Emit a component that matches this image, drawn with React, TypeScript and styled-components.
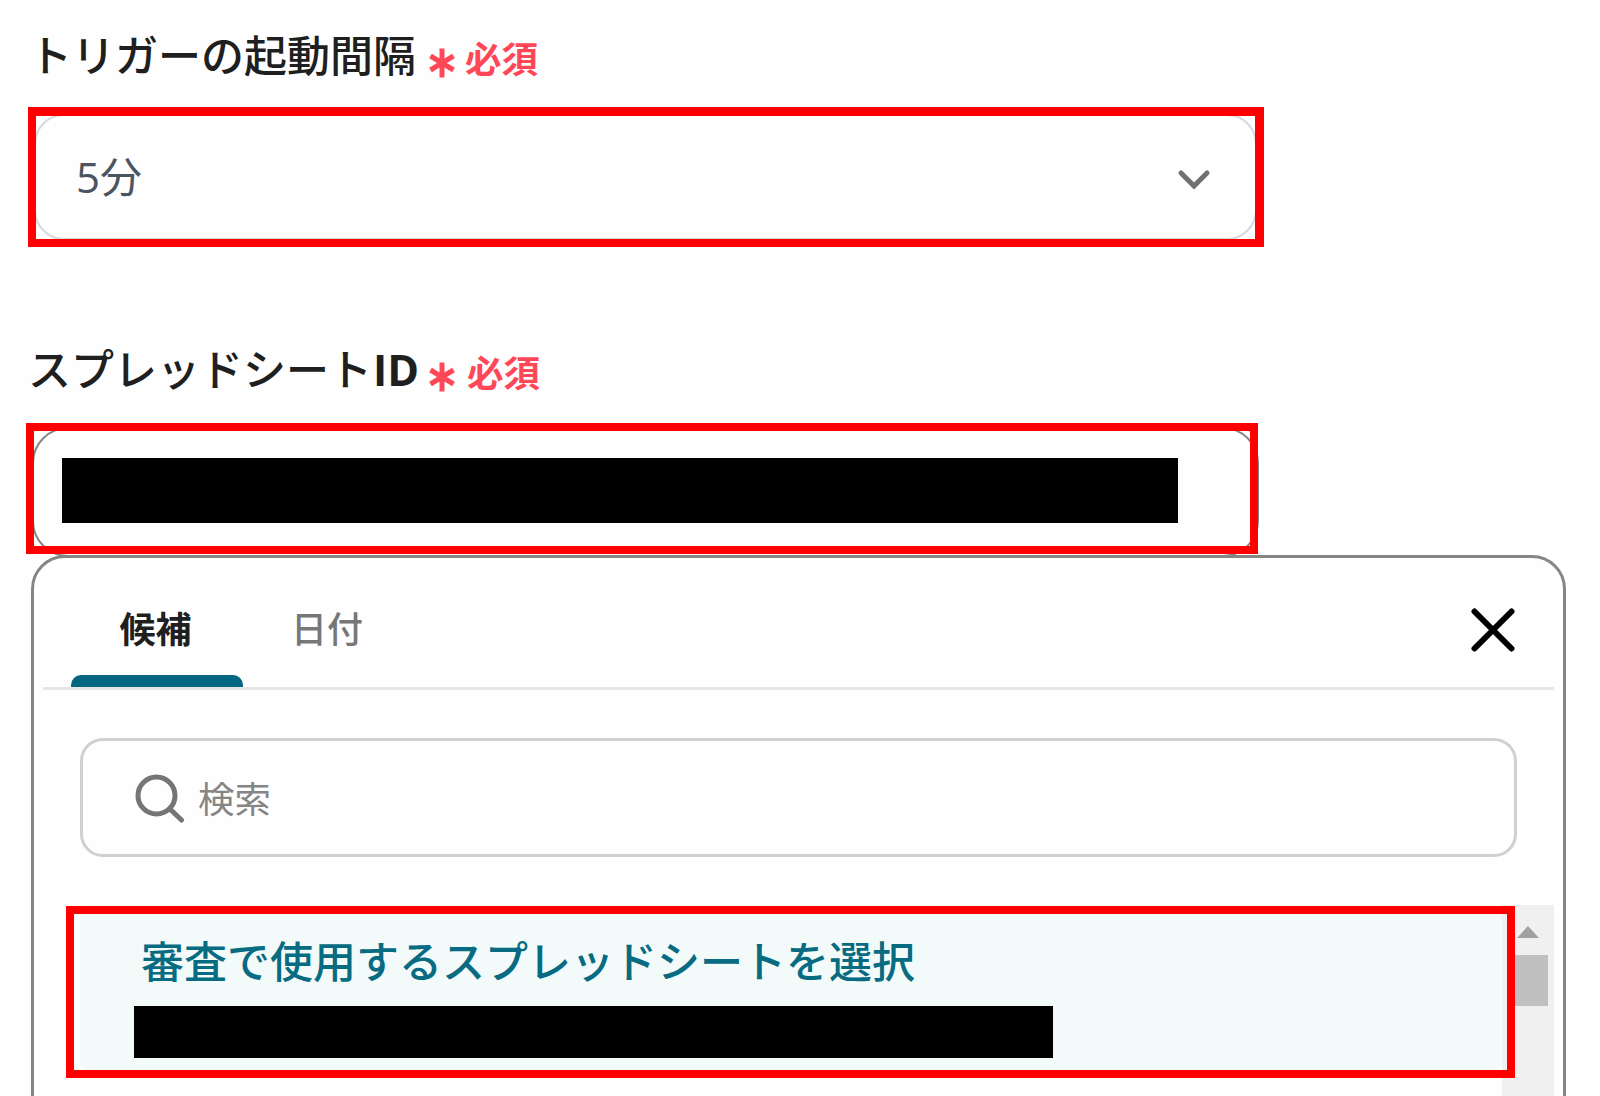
import React, { FC, ReactNode } from "react";

import styled, { createGlobalStyle } from "styled-components";

type RequiredLabelProps = {
  children: ReactNode;
  indent?: number;
  gap: number;
};

const RequiredLabel: FC<RequiredLabelProps> = ({
  children,
  indent = 0,
  gap,
}) => (
  <LabelRow>
    <LabelText $indent={indent}>{children}</LabelText>
    <Star viewBox="0 0 26 30">
      <path d="M13 0.5V29.5M1.5 8L24.5 22M24.5 8L1.5 22" />
    </Star>
    <RequiredText $gap={gap}>必須</RequiredText>
  </LabelRow>
);

const App: FC = () => {
  return (
    <Page>
      <GlobalStyle />
      <RequiredLabel gap={10} indent={-1}>
        トリガーの起動間隔
      </RequiredLabel>
      <SelectField>
        <SelectValue>5分</SelectValue>
        <ChevronIcon viewBox="0 0 34 22">
          <path d="M4 4L17 17L30 4" />
        </ChevronIcon>
        <SelectHighlight />
      </SelectField>

      <SheetSection>
        <RequiredLabel gap={12} indent={-2}>
          スプレッドシート<b>ID</b>
        </RequiredLabel>
        <TextField>
          <Redacted $width={1116} $height={65} />
          <TextHighlight />
        </TextField>
      </SheetSection>

      <Panel>
        <TabBar>
          <Tab $active>候補</Tab>
          <Tab>日付</Tab>
          <CloseIcon viewBox="0 0 44 44">
            <path d="M3.5 3.5L40.5 40.5M40.5 3.5L3.5 40.5" />
          </CloseIcon>
        </TabBar>
        <SearchBox>
          <SearchIcon viewBox="0 0 50 50">
            <circle cx="21.5" cy="21.5" r="18.5" />
            <path d="M35 35L46.5 46" />
          </SearchIcon>
          <SearchText>検索</SearchText>
        </SearchBox>
        <ListArea>
          <Option>
            <OptionTitle>審査で使用するスプレッドシートを選択</OptionTitle>
            <Redacted $width={919} $height={52} />
          </Option>
          <ScrollTrack>
            <UpArrow />
            <Thumb />
          </ScrollTrack>
          <OptionHighlight />
        </ListArea>
      </Panel>
    </Page>
  );
};

export default App;

const GlobalStyle = createGlobalStyle`
  * {
    box-sizing: border-box;
  }

  body {
    margin: 0;
    overflow: hidden;
    background: #fefefe;
  }
`;

const Page = styled.main`
  display: flex;
  flex-direction: column;
  height: 1096px;
  padding: 25px 34px 0 30px;
  overflow: hidden;
  font-family: "Open Sans", "Noto Sans CJK JP", sans-serif;

  > * {
    flex-shrink: 0;
  }
`;

const LabelRow = styled.div`
  display: flex;
  align-items: center;
  height: 60px;
`;

const LabelText = styled.span<{ $indent: number }>`
  width: 399px;
  padding-top: 2px;
  color: #1f1f1f;
  font-size: 43px;
  font-weight: 500;
  line-height: 60px;
  text-indent: ${({ $indent }) => $indent}px;
  white-space: nowrap;

  b {
    margin-left: 1px;
    font-weight: 700;
  }
`;

const Star = styled.svg`
  width: 26px;
  height: 30px;
  margin-top: 15px;
  fill: none;
  stroke: #ff4757;
  stroke-width: 5;
`;

const RequiredText = styled.span<{ $gap: number }>`
  margin: 8px 0 0 ${({ $gap }) => $gap}px;
  color: #ff4757;
  font-size: 36.5px;
  font-weight: 700;
  line-height: 54px;
`;

const SelectField = styled.div`
  position: relative;
  display: flex;
  align-items: center;
  justify-content: space-between;
  width: 1223px;
  height: 126px;
  margin: 29px 0 0 4px;
  padding: 0 44px 0 40px;
  border: 2px solid #d3dae0;
  border-radius: 30px;
`;

const SelectValue = styled.span`
  color: #4b5561;
  font-size: 42px;
  line-height: 60px;
`;

const ChevronIcon = styled.svg`
  width: 34px;
  height: 22px;
  margin-top: 5px;
  fill: none;
  stroke: #707070;
  stroke-width: 5;
  stroke-linecap: round;
`;

const Highlight = styled.div`
  position: absolute;
  border: 8px solid #f00;
  pointer-events: none;
`;

const SelectHighlight = styled(Highlight)`
  inset: -9px -9px -9px -8px;
  border-width: 9px 9px 8px 8px;
`;

const SheetSection = styled.section`
  margin-top: 99px;
`;

const TextField = styled.div`
  position: relative;
  width: 1227px;
  height: 130px;
  margin: 28px 0 0 2px;
  padding: 29px 28px;
  border: 2px solid #858585;
  border-radius: 36px;
`;

const TextHighlight = styled(Highlight)`
  inset: -6px -1px 1px -8px;
`;

const Redacted = styled.div<{ $width: number; $height: number }>`
  width: ${({ $width }) => $width}px;
  height: ${({ $height }) => $height}px;
  background: #000;
`;

const Panel = styled.section`
  width: 1535px;
  height: 600px;
  margin: -2px 0 0 1px;
  padding: 0 9px;
  border: 3px solid #858585;
  border-radius: 34px;
`;

const TabBar = styled.div`
  display: flex;
  align-items: flex-end;
  height: 132px;
  padding-left: 28px;
  border-bottom: 3px solid #e6e6e6;
`;

const Tab = styled.span<{ $active?: boolean }>`
  width: ${({ $active }) => ($active ? 172 : 168)}px;
  padding-right: ${({ $active }) => ($active ? 3 : 0)}px;
  color: ${({ $active }) => ($active ? "#1f1f1f" : "#777")};
  font-size: 36px;
  font-weight: ${({ $active }) => ($active ? 700 : 500)};
  line-height: 56px;
  text-align: center;

  &::after {
    content: "";
    display: block;
    height: 12px;
    margin: 17px -3px 0 0;
    border-radius: 10px 10px 0 0;
    background: ${({ $active }) => ($active ? "#056681" : "transparent")};
  }
`;

const CloseIcon = styled.svg`
  width: 44px;
  height: 44px;
  margin: 0 39px 35px auto;
  fill: none;
  stroke: #000;
  stroke-width: 6;
  stroke-linecap: round;
`;

const SearchBox = styled.div`
  display: flex;
  align-items: center;
  width: 1437px;
  height: 119px;
  margin: 48px 0 0 37px;
  padding-left: 52px;
  border: 3px solid #d0d0d0;
  border-radius: 23px;
`;

const SearchIcon = styled.svg`
  width: 50px;
  height: 50px;
  margin: 2px 13px 0 0;
  fill: none;
  stroke: #757575;
  stroke-width: 5;
  stroke-linecap: round;
`;

const SearchText = styled.span`
  padding-top: 3px;
  color: #858585;
  font-size: 36.5px;
  line-height: 54px;
`;

const ListArea = styled.div`
  position: relative;
  display: flex;
  height: 240px;
  margin: 48px 0 0 37px;
`;

const Option = styled.div`
  width: 1422px;
  height: 166px;
  padding: 27px 54px 0;
  border-radius: 10px;
  background: #f2fafa;
`;

const OptionTitle = styled.div`
  height: 74px;
  padding-left: 7px;
  color: #076b82;
  font-size: 43px;
  font-weight: 500;
  line-height: 60px;
  white-space: nowrap;
`;

const ScrollTrack = styled.div`
  display: flex;
  flex-direction: column;
  align-items: center;
  width: 52px;
  padding-top: 21px;
  background: #f0f0f0;
`;

const UpArrow = styled.i`
  border: 11px solid transparent;
  border-top: 0;
  border-bottom: 12px solid #a0a0a0;
`;

const Thumb = styled.div`
  width: 40px;
  height: 51px;
  margin-top: 17px;
  background: #c0c0c0;
`;

const OptionHighlight = styled(Highlight)`
  top: 1px;
  left: -14px;
  width: 1449px;
  height: 172px;
`;
